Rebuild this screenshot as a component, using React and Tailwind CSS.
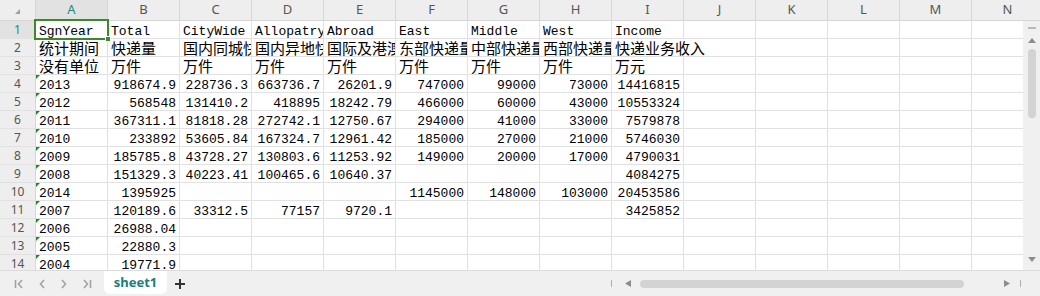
import React from 'react';
import clsx from 'clsx';

const COLS = ['A', 'B', 'C', 'D', 'E', 'F', 'G', 'H', 'I', 'J', 'K', 'L', 'M', 'N'];

const DATA = [
  ['SgnYear', 'Total', 'CityWide', 'Allopatry', 'Abroad', 'East', 'Middle', 'West', 'Income'],
  ['统计期间', '快递量', '国内同城快递量', '国内异地快递量', '国际及港澳台快递量', '东部快递量', '中部快递量', '西部快递量', '快递业务收入'],
  ['没有单位', '万件', '万件', '万件', '万件', '万件', '万件', '万件', '万元'],
  ['2013', '918674.9', '228736.3', '663736.7', '26201.9', '747000', '99000', '73000', '14416815'],
  ['2012', '568548', '131410.2', '418895', '18242.79', '466000', '60000', '43000', '10553324'],
  ['2011', '367311.1', '81818.28', '272742.1', '12750.67', '294000', '41000', '33000', '7579878'],
  ['2010', '233892', '53605.84', '167324.7', '12961.42', '185000', '27000', '21000', '5746030'],
  ['2009', '185785.8', '43728.27', '130803.6', '11253.92', '149000', '20000', '17000', '4790031'],
  ['2008', '151329.3', '40223.41', '100465.6', '10640.37', '', '', '', '4084275'],
  ['2014', '1395925', '', '', '', '1145000', '148000', '103000', '20453586'],
  ['2007', '120189.6', '33312.5', '77157', '9720.1', '', '', '', '3425852'],
  ['2006', '26988.04'],
  ['2005', '22880.3'],
  ['2004', '19771.9'],
];

const mono = "font-['Liberation_Mono','Noto_Sans_CJK_SC',monospace] text-[13px] leading-[10px]";
const cjk = "font-['Noto_Sans_CJK_SC',sans-serif] text-[15px] leading-[15px]";

function Cell({ r, c, value }) {
  const isCjk = r === 1 || r === 2;
  const right = r >= 3 && c > 0;
  const spills = r === 1 && c === 8;
  return (
    <div
      className={clsx(
        'relative flex h-full w-[72px] shrink-0 items-end whitespace-nowrap border-r px-[3px] pb-[1px] text-black',
        spills ? 'overflow-visible border-r-transparent' : 'overflow-hidden border-r-[#e1e1e1]',
        right && 'justify-end',
        isCjk ? cjk : mono
      )}
    >
      {r >= 3 && c === 0 && (
        <span className="absolute left-0 top-0 h-0 w-0 border-r-[4px] border-t-[4px] border-r-transparent border-t-[#1f8a2e]" />
      )}
      {value}
    </div>
  );
}

function Sheet() {
  return (
    <div className="flex min-w-0 flex-1 flex-col overflow-hidden">
      {DATA.map((row, r) => (
        <div key={r} className="flex h-[18px] shrink-0 border-b border-[#e1e1e1]">
          <div
            className={clsx(
              "flex w-[36px] shrink-0 items-center justify-center border-r border-[#d6d6d6] font-['Noto_Sans',sans-serif] text-[12px]",
              r === 0 ? 'bg-[#e2e2e2] text-[#24897c]' : 'bg-[#eeeeee] text-[#555]'
            )}
          >
            {r + 1}
          </div>
          {COLS.map((col, c) => (
            <Cell key={col} r={r} c={c} value={row[c] || ''} />
          ))}
        </div>
      ))}
    </div>
  );
}

function VScroll() {
  return (
    <div className="flex w-[17px] shrink-0 flex-col items-center bg-[#f0f0f0]">
      <div className="mt-[6px] h-[2px] w-[8px] bg-[#b8b8b8]" />
      <svg className="mt-[9px]" width="8" height="5" viewBox="0 0 8 5">
        <polygon points="4,0 8,5 0,5" fill="#8c8c8c" />
      </svg>
      <div className="mt-[6px] h-[69px] w-[8px] rounded-full bg-[#d3d3d3]" />
      <div className="flex-1" />
      <svg className="mb-[8px]" width="8" height="5" viewBox="0 0 8 5">
        <polygon points="0,0 8,0 4,5" fill="#8c8c8c" />
      </svg>
    </div>
  );
}

function Chevron({ dir, bar }) {
  return (
    <svg width="12" height="10" viewBox="0 0 12 10" fill="none" stroke="#a3a3a3" strokeWidth="1.6">
      {bar === 'left' && <line x1="1.5" y1="1" x2="1.5" y2="9" />}
      {dir === 'left' ? <polyline points="8,1 4.5,5 8,9" /> : <polyline points="4,1 7.5,5 4,9" />}
      {bar === 'right' && <line x1="10.5" y1="1" x2="10.5" y2="9" />}
    </svg>
  );
}

function BottomBar() {
  return (
    <div className="flex h-[26px] shrink-0 items-start border-t border-[#dcdcdc] bg-[#f0f0f0]">
      <div className="ml-[14px] flex h-[25px] items-center gap-[10px]">
        <Chevron dir="left" bar="left" />
        <Chevron dir="left" />
        <Chevron dir="right" />
        <Chevron dir="right" bar="right" />
      </div>
      <div className="ml-[12px] flex h-[23px] w-[63px] items-center justify-center rounded-b-[6px] bg-white font-['Noto_Sans',sans-serif] text-[13px] font-bold text-[#17807a]">
        sheet1
      </div>
      <div className="ml-[7px] flex h-[25px] items-center">
        <svg width="12" height="12" viewBox="0 0 12 12" stroke="#333" strokeWidth="2">
          <line x1="6" y1="1" x2="6" y2="11" />
          <line x1="1" y1="6" x2="11" y2="6" />
        </svg>
      </div>
      <div className="ml-auto mr-[19px] flex h-[25px] items-center">
        <div className="h-[7px] w-[1px] bg-[#b0b0b0]" />
        <svg className="ml-[13px]" width="6" height="7" viewBox="0 0 6 7">
          <polygon points="6,0 6,7 0,3.5" fill="#8c8c8c" />
        </svg>
        <div className="ml-[9px] h-[8px] w-[324px] rounded-full bg-[#d3d3d3]" />
        <svg className="ml-[40px]" width="6" height="7" viewBox="0 0 6 7">
          <polygon points="0,0 0,7 6,3.5" fill="#8c8c8c" />
        </svg>
        <div className="ml-[10px] h-[7px] w-[1px] bg-[#b0b0b0]" />
      </div>
    </div>
  );
}

export default function App() {
  return (
    <div className="relative flex h-[296px] w-[1040px] flex-col overflow-hidden bg-white">
      <div className="flex h-[21px] shrink-0 overflow-hidden border-b border-[#d6d6d6] bg-[#eeeeee]">
        <div className="relative w-[36px] shrink-0 border-r border-[#d6d6d6]">
          <svg className="absolute left-[15px] top-[9px]" width="5" height="5" viewBox="0 0 5 5">
            <polygon points="5,0 5,5 0,5" fill="#a0a0a0" />
          </svg>
        </div>
        {COLS.map((col, c) => (
          <div
            key={col}
            className={clsx(
              "flex w-[72px] shrink-0 items-center justify-center border-r border-[#d6d6d6] font-['Noto_Sans',sans-serif] text-[13px]",
              c === 0 ? 'bg-[#e2e2e2] text-[#24897c]' : 'text-[#555]'
            )}
          >
            {col}
          </div>
        ))}
      </div>
      <div className="flex min-h-0 flex-1">
        <Sheet />
        <VScroll />
      </div>
      <BottomBar />
      {/* active cell frame on A1 */}
      <div className="pointer-events-none absolute left-[34px] top-[19px] h-[21px] w-[75px] border-2 border-[#3a8a2c]">
        <span className="absolute -bottom-[4px] -right-[4px] h-[6px] w-[6px] border border-white bg-[#3a8a2c]" />
      </div>
    </div>
  );
}
